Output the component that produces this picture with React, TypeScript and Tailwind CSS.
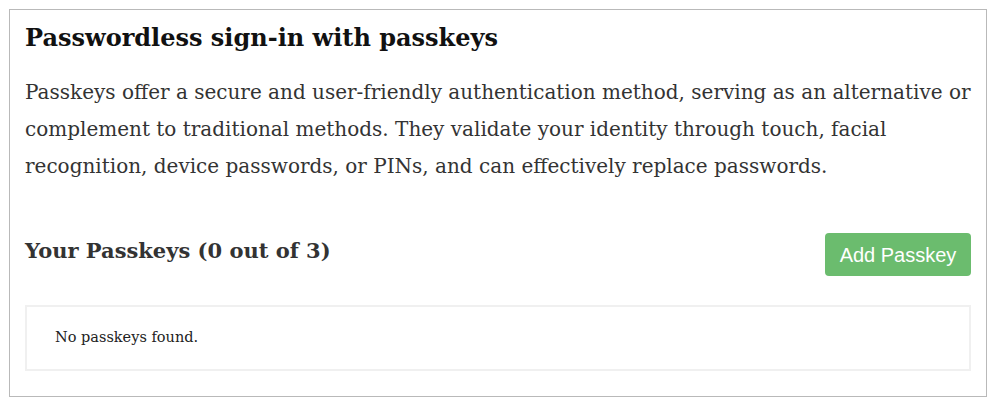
export default function App() {
  return (
    <div className="w-[1000px] h-[411px] bg-white pt-[9px] pl-[9px]">
      <div className="w-[978px] h-[388px] border border-[#b9b9b9] px-[15px] pt-[10px]" style={{ fontFamily: '"DejaVu Serif", serif' }}>
        <h1 className="text-[24px] leading-[36px] font-bold text-[#111]">Passwordless sign-in with passkeys</h1>
        <p className="mt-[18px] text-[20px] leading-[37px] text-[#333]">
          Passkeys offer a secure and user-friendly authentication method, serving as an alternative or complement to traditional methods. They validate your identity through touch, facial recognition, device passwords, or PINs, and can effectively replace passwords.
        </p>
        <div className="mt-[48px] flex items-start justify-between">
          <h2 className="mt-[3px] text-[21px] leading-[30px] font-bold text-[#333]">Your Passkeys (0 out of 3)</h2>
          <button className="w-[146px] h-[43px] rounded-[4px] bg-[#6bbc6e] text-white text-[20px]" style={{ fontFamily: '"Liberation Sans", Arial, sans-serif' }}>
            Add Passkey
          </button>
        </div>
        <div className="mt-[29px] h-[66px] border-2 border-[#f0f0f0] pl-[28px] flex items-center">
          <span className="text-[14.5px] text-[#222]">No passkeys found.</span>
        </div>
      </div>
    </div>
  );
}
